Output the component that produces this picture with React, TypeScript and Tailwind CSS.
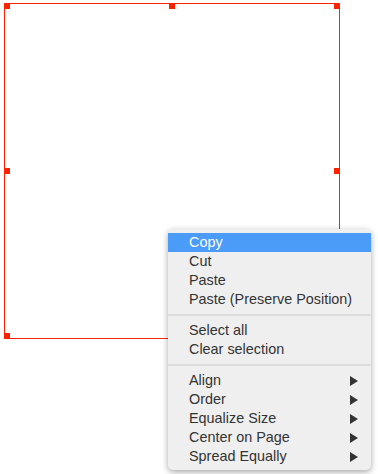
import React from "react";

const Arrow = () => (
  <svg width="8" height="10" viewBox="0 0 8 10" className="block">
    <path d="M0 0 L8 5 L0 10 Z" fill="#333333" />
  </svg>
);

type Item = { label: string; sub?: boolean; active?: boolean } | "sep";

const items: Item[] = [
  { label: "Copy", active: true },
  { label: "Cut" },
  { label: "Paste" },
  { label: "Paste (Preserve Position)" },
  "sep",
  { label: "Select all" },
  { label: "Clear selection" },
  "sep",
  { label: "Align", sub: true },
  { label: "Order", sub: true },
  { label: "Equalize Size", sub: true },
  { label: "Center on Page", sub: true },
  { label: "Spread Equally", sub: true },
];

export default function App() {
  return (
    <div className="relative w-[378px] h-[474px] bg-white overflow-hidden" style={{ fontFamily: '"Liberation Sans", Arial, sans-serif' }}>
      {/* selection rectangle */}
      <div className="absolute left-[4px] top-[3px] w-[336px] h-[336px] border border-[#ff2200]">
        <div className="absolute left-[-1px] top-[-1px] w-[6px] h-[6px] bg-[#ff2200]" />
        <div className="absolute left-[164px] top-[-1px] w-[6px] h-[6px] bg-[#ff2200]" />
        <div className="absolute right-[-1px] top-[-1px] w-[6px] h-[6px] bg-[#ff2200]" />
        <div className="absolute left-[-1px] top-[164px] w-[6px] h-[6px] bg-[#ff2200]" />
        <div className="absolute right-[-1px] top-[164px] w-[6px] h-[6px] bg-[#ff2200]" />
        <div className="absolute left-[-1px] bottom-[-1px] w-[6px] h-[6px] bg-[#ff2200]" />
        <div className="absolute left-[164px] bottom-[-1px] w-[6px] h-[6px] bg-[#ff2200]" />
        <div className="absolute right-[-1px] bottom-[-1px] w-[6px] h-[6px] bg-[#ff2200]" />
      </div>

      {/* context menu */}
      <div className="absolute left-[168px] top-[229px] w-[203px] rounded-[5px] bg-[#efefef] py-[4px] shadow-[0_2px_6px_rgba(0,0,0,0.35)] flex flex-col">
        {items.map((it, i) =>
          it === "sep" ? (
            <div key={i} className="h-[2px] my-[5px] bg-[#dcdcdc]" />
          ) : (
            <div
              key={i}
              className={
                "h-[19px] flex items-center justify-between pl-[21px] pr-[13px] text-[14.4px] leading-[19px] " +
                (it.active ? "bg-[#4b9bf9] text-white" : "text-[#333333]")
              }
            >
              <span>{it.label}</span>
              {it.sub ? <Arrow /> : null}
            </div>
          )
        )}
      </div>
    </div>
  );
}
